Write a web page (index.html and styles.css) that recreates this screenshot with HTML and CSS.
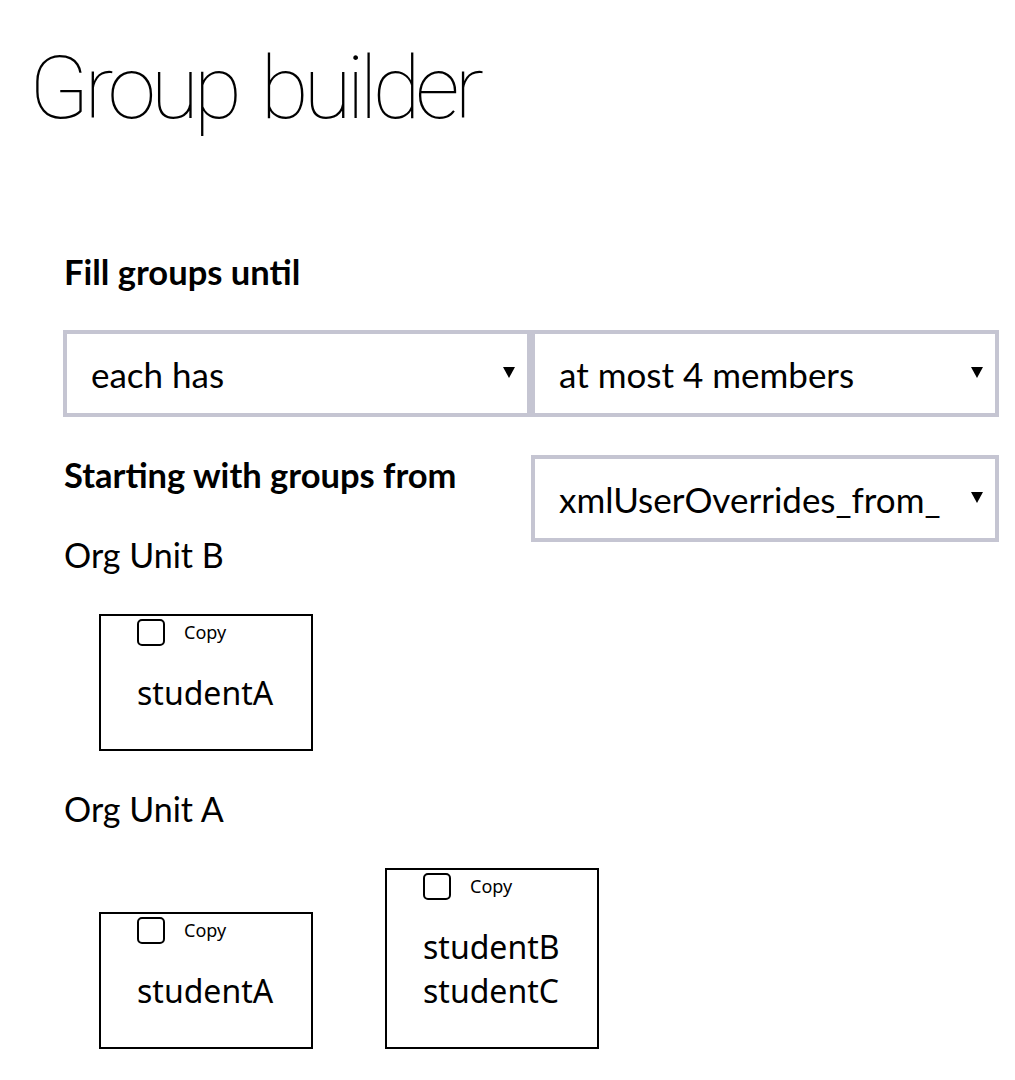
FILE: index.html
```html
<!DOCTYPE html>
<html lang="en">
<head>
<meta charset="utf-8">
<title>Group builder</title>
<link rel="stylesheet" href="styles.css">
</head>
<body>
<h1 class="title">Group builder</h1>
<main class="panel">
  <h2 class="label">Fill groups until</h2>
  <div class="select-row">
    <div class="select-wrap"><select class="select"><option>each has</option></select></div>
    <div class="select-wrap"><select class="select"><option>at most 4 members</option></select></div>
  </div>
  <div class="start-row">
    <h2 class="label start-label">Starting with groups from</h2>
    <div class="select-wrap"><select class="select"><option>xmlUserOverrides_from_</option></select></div>
  </div>

  <section class="unit">
    <h3 class="unit-name">Org Unit B</h3>
    <div class="cards">
      <div class="card">
        <label class="copy"><span class="box"></span>Copy</label>
        <ul class="names"><li>studentA</li></ul>
      </div>
    </div>
  </section>

  <section class="unit">
    <h3 class="unit-name">Org Unit A</h3>
    <div class="cards">
      <div class="card">
        <label class="copy"><span class="box"></span>Copy</label>
        <ul class="names"><li>studentA</li></ul>
      </div>
      <div class="card">
        <label class="copy"><span class="box"></span>Copy</label>
        <ul class="names"><li>studentB</li><li>studentC</li></ul>
      </div>
    </div>
  </section>
</main>
</body>
</html>
```
FILE: styles.css
```css
* { box-sizing: border-box; }
body {
  margin: 0;
  font-family: Lato, "Open Sans", sans-serif;
  color: #000;
  background: #fff;
}
.title {
  margin: 0;
  padding: 38px 0 0 29px;
  font-family: Roboto, Lato, sans-serif;
  font-size: 88px;
  line-height: 100px;
  font-weight: 100;
  letter-spacing: -5.2px;
  word-spacing: 8px;
}
.panel {
  margin: 0 0 0 63px;
  width: 936px;
  padding-top: 114px;
}
.label {
  margin: 0;
  font-size: 34.5px;
  font-weight: 700;
  line-height: 40px;
  padding-left: 1px;
}
.select-row {
  display: flex;
  margin-top: 38px;
}
.select-wrap {
  position: relative;
  width: 50%;
}
.select-wrap::after {
  content: "";
  position: absolute;
  right: 16px;
  top: 37px;
  border-left: 6px solid transparent;
  border-right: 6px solid transparent;
  border-top: 11px solid #000;
  pointer-events: none;
}
.select {
  appearance: none;
  -webkit-appearance: none;
  display: block;
  width: 100%;
  height: 87px;
  margin: 0;
  padding: 0 40px 0 24px;
  border: 4px solid #c5c5d2;
  border-radius: 0;
  background: #fff;
  font-family: Lato, "Open Sans", sans-serif;
  font-size: 35px;
  color: #000;
}
.start-row {
  display: flex;
  margin-top: 38px;
}
.start-label {
  width: 50%;
}
.unit-name {
  margin: 0;
  font-size: 34px;
  font-weight: 400;
  line-height: 40px;
  padding-left: 1px;
}
.unit:first-of-type .unit-name { margin-top: -7px; }
.unit + .unit .unit-name { margin-top: 38px; }
.cards {
  display: flex;
  align-items: flex-end;
  gap: 72px;
  padding-left: 36px;
  margin-top: 39px;
}
.card {
  width: 214px;
  border: 2px solid #000;
  padding: 3px 10px 34px 36px;
  font-family: "Noto Sans", "Open Sans", sans-serif;
}
.copy {
  display: flex;
  align-items: center;
  gap: 19px;
  height: 26px;
  font-size: 18px;
}
.box {
  width: 28px;
  height: 27px;
  border: 2px solid #000;
  border-radius: 5px;
}
.names {
  list-style: none;
  margin: 26px 0 0;
  padding: 0;
  font-size: 32px;
  line-height: 44px;
}
```
